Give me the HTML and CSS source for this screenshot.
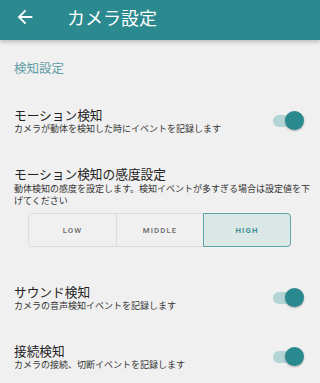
FILE: index.html
```html
<!DOCTYPE html>
<html lang="ja">
<head>
<meta charset="utf-8">
<link rel="stylesheet" href="styles.css">
</head>
<body>
<header class="appbar">
  <svg class="back" viewBox="0 0 24 24" width="22" height="22"><path fill="#fff" d="M20 11H7.83l5.59-5.59L12 4l-8 8 8 8 1.41-1.41L7.83 13H20v-2z"/></svg>
  <h1 class="title">カメラ設定</h1>
</header>
<main class="content">
  <div class="section-label">検知設定</div>

  <div class="row row-first">
    <div class="text">
      <div class="row-title">モーション検知</div>
      <div class="row-sub">カメラが動体を検知した時にイベントを記録します</div>
    </div>
    <div class="switch"><span class="track"></span><span class="thumb"></span></div>
  </div>

  <div class="block">
    <div class="row-title">モーション検知の感度設定</div>
    <div class="row-sub wide">動体検知の感度を設定します。検知イベントが多すぎる場合は設定値を下げてください</div>
    <div class="segments">
      <div class="seg">LOW</div>
      <div class="seg">MIDDLE</div>
      <div class="seg active">HIGH</div>
    </div>
  </div>

  <div class="row row-after-block">
    <div class="text">
      <div class="row-title">サウンド検知</div>
      <div class="row-sub">カメラの音声検知イベントを記録します</div>
    </div>
    <div class="switch"><span class="track"></span><span class="thumb"></span></div>
  </div>

  <div class="row">
    <div class="text">
      <div class="row-title">接続検知</div>
      <div class="row-sub">カメラの接続、切断イベントを記録します</div>
    </div>
    <div class="switch"><span class="track"></span><span class="thumb"></span></div>
  </div>
</main>
</body>
</html>
```
FILE: styles.css
```css
html, body {
  margin: 0;
  padding: 0;
  background: #f0f0f0;
  font-family: "Noto Sans CJK JP", "Noto Sans", Roboto, sans-serif;
  color: #222;
}
.appbar {
  height: 40px;
  background: #2b8a8f;
  display: flex;
  align-items: center;
  padding: 0 0 6px 14px;
  box-sizing: border-box;
  box-shadow: 0 2px 4px rgba(0,0,0,0.22);
  position: relative;
}
.back {
  display: block;
  flex: none;
}
.title {
  margin: 0 0 0 31px;
  font-size: 18px;
  font-weight: 400;
  color: #fff;
  line-height: 22px;
}
.content {
  padding: 0 16px 0 14px;
}
.section-label {
  margin-top: 20px;
  font-size: 12.5px;
  line-height: 16px;
  color: #5f9fa4;
}
.row {
  display: flex;
  align-items: center;
  justify-content: space-between;
  margin-top: 31px;
}
.row-first {
  margin-top: 31px;
}
.row-after-block {
  margin-top: 37px;
}
.row-title {
  font-size: 12.7px;
  line-height: 16px;
  color: #222;
}
.row-sub {
  font-size: 9px;
  line-height: 12px;
  color: #333;
}
.row-sub.wide {
  line-height: 11.5px;
  margin-right: -14px;
  margin-top: 1px;
}
.block {
  margin-top: 31px;
}
.switch {
  position: relative;
  width: 31px;
  height: 20px;
  flex: none;
}
.track {
  position: absolute;
  left: 0;
  top: 4px;
  width: 28px;
  height: 12px;
  border-radius: 6px;
  background: #b3d5d6;
}
.thumb {
  position: absolute;
  right: 0;
  top: 0;
  width: 19px;
  height: 19px;
  border-radius: 50%;
  background: #2a898e;
  box-shadow: 0 1px 2px rgba(0,0,0,0.3);
}
.segments {
  display: grid;
  grid-template-columns: 1fr 1fr 1fr;
  margin: 7px 13px 0 14px;
  height: 34px;
  border: 1px solid #dcdcdc;
  border-radius: 4px;
  box-sizing: border-box;
}
.seg {
  display: flex;
  align-items: center;
  justify-content: center;
  font-family: Roboto, "Noto Sans", sans-serif;
  font-size: 7.8px;
  font-weight: 500;
  letter-spacing: 1.1px;
  color: #6a6a6a;
  border-left: 1px solid #dcdcdc;
}
.seg:first-child {
  border-left: none;
}
.seg.active {
  margin: -1px -1px -1px 0;
  background: #dce8e6;
  border: 1.5px solid #5fa8a8;
  border-radius: 0 4px 4px 0;
  color: #3e8f93;
  font-weight: 700;
}
```
